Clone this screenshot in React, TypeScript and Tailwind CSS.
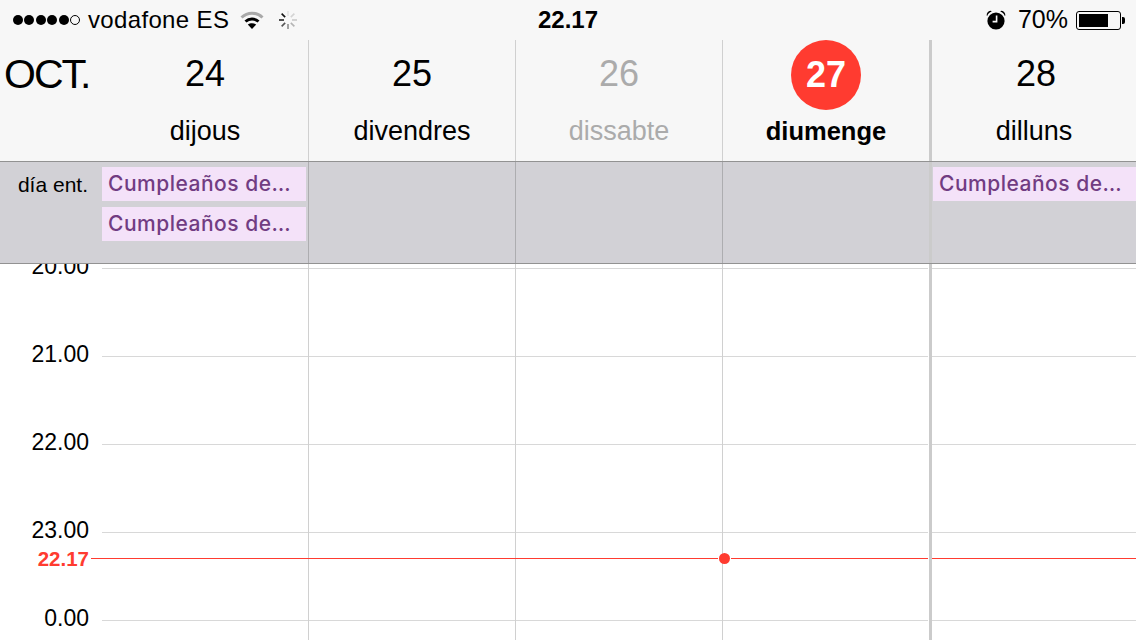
const sans = "font-['Liberation_Sans',Arial,sans-serif]";

const days = [
  { num: '24', name: 'dijous', width: 'w-[207px]', line: 'border-r border-[#d0d0d0]', allDayLine: 'border-r border-[#adadb0]' },
  { num: '25', name: 'divendres', width: 'w-[207px]', line: 'border-r border-[#d0d0d0]', allDayLine: 'border-r border-[#adadb0]' },
  { num: '26', name: 'dissabte', width: 'w-[207px]', line: 'border-r border-[#d0d0d0]', allDayLine: 'border-r border-[#adadb0]', muted: true },
  { num: '27', name: 'diumenge', width: 'w-[207px]', line: 'border-r border-[#d0d0d0]', allDayLine: 'border-r border-[#adadb0]', today: true },
  { num: '28', name: 'dilluns', width: 'w-[204px]', line: '', allDayLine: '' },
];

// 4th column carries the thick week divider
function columnClass(i: number) {
  if (i === 3) return 'w-[209px] border-r-[3px] border-[#cbcbcb]';
  return `${days[i].width} ${days[i].line}`;
}

function SignalDots() {
  return (
    <div className="flex items-center gap-[1.4px]">
      {[0, 1, 2, 3, 4].map((i) => (
        <span key={i} className="w-[10px] h-[10px] rounded-full bg-black" />
      ))}
      <span className="w-[10px] h-[10px] rounded-full border border-black" />
    </div>
  );
}

function Wifi() {
  return (
    <svg width="24" height="18" viewBox="0 0 24 18" className="ml-[11px]">
      <path d="M1.5 6.5C7.5 0.7 16.5 0.7 22.5 6.5" fill="none" stroke="#a9a9a9" strokeWidth="3" />
      <path d="M5.5 10.5C9.2 7.2 14.8 7.2 18.5 10.5" fill="none" stroke="#000" strokeWidth="3" />
      <path d="M7.8 13.6C10.2 11.8 13.8 11.8 16.2 13.6L12 18Z" fill="#000" />
    </svg>
  );
}

function Spinner() {
  const shades = ['#e2e2e2', '#d4d4d4', '#c8c8c8', '#b4b4b4', '#8c8c8c', '#555555', '#222222', '#111111'];
  // starts at the top spoke and goes clockwise
  return (
    <svg width="20" height="20" viewBox="0 0 20 20" className="ml-[14px]">
      {shades.map((c, i) => (
        <line key={i} x1="10" y1="1" x2="10" y2="6" stroke={c} strokeWidth="1.6" transform={`rotate(${i * 45} 10 10)`} />
      ))}
    </svg>
  );
}

function Alarm() {
  return (
    <svg width="20" height="20" viewBox="0 0 20 20">
      <path d="M0.6 5.5C0.6 2.6 2.6 0.8 5 0.8L5.6 1.8C3.4 2.4 2 3.8 1.4 5.8Z" fill="#000" />
      <path d="M19.4 5.5C19.4 2.6 17.4 0.8 15 0.8L14.4 1.8C16.6 2.4 18 3.8 18.6 5.8Z" fill="#000" />
      <circle cx="10" cy="11" r="8.6" fill="#000" />
      <path d="M10.6 5.5V11.6H6.6" fill="none" stroke="#f7f7f7" strokeWidth="1.6" />
    </svg>
  );
}

function Battery() {
  return (
    <div className="flex items-center ml-[8px]">
      <div className="w-[45px] h-[19px] rounded-[3px] border border-black p-[2px]">
        <div className="w-[29px] h-full bg-black" />
      </div>
      <div className="w-[3px] h-[7px] ml-px bg-black rounded-r-[2px]" />
    </div>
  );
}

function Event() {
  return (
    <div className="h-[34px] bg-[#f4e2f9] pl-[6px] font-['Inter',sans-serif] text-[21px] tracking-[0.5px] leading-[34px] font-medium text-[#713c82] whitespace-nowrap overflow-hidden">
      Cumpleaños de…
    </div>
  );
}

const hours = ['20.00', '21.00', '22.00', '23.00', '0.00'];

export default function App() {
  return (
    <div className={`w-[1136px] h-[640px] overflow-hidden bg-white text-black flex flex-col relative ${sans}`}>
      {/* status bar */}
      <div className="h-[40px] shrink-0 bg-[#f7f7f7] flex items-center text-[24px]">
        <div className="flex-1 flex items-center pl-[13px]">
          <SignalDots />
          <span className="ml-[8px] tracking-[0.35px]">vodafone ES</span>
          <Wifi />
          <Spinner />
        </div>
        <div className="text-[24px] font-bold pr-[2px]">22.17</div>
        <div className="flex-1 flex items-center justify-end pr-[11px]">
          <Alarm />
          <span className="ml-[12px] text-[25px]">70%</span>
          <Battery />
        </div>
      </div>

      {/* day headers */}
      <div className="h-[121px] shrink-0 bg-[#f7f7f7] flex">
        <div className="w-[102px] shrink-0 pl-[4px] pt-[10px] text-[41px] leading-[48px] tracking-[-2px]">OCT.</div>
        {days.map((d, i) => (
          <div key={d.num} className={`shrink-0 flex flex-col items-center ${columnClass(i)}`}>
            {d.today ? (
              <div className="w-[70px] h-[70px] mb-[7px] rounded-full bg-[#ff3b30] text-white font-bold text-[36px] flex items-center justify-center">
                {d.num}
              </div>
            ) : (
              <div className={`h-[68px] mb-[9px] flex items-center text-[36px] ${d.muted ? 'text-[#ababab]' : ''} ${i === 4 ? 'pl-[4px]' : ''}`}>{d.num}</div>
            )}
            <div className={`leading-[28px] ${d.today ? 'text-[25.5px] font-bold' : 'text-[27px]'} ${d.muted ? 'text-[#ababab]' : ''}`}>
              {d.name}
            </div>
          </div>
        ))}
      </div>

      {/* all day band */}
      <div className="h-[103px] shrink-0 bg-[#d2d1d6] border-y border-[#929292] flex relative z-10">
        <div className="w-[102px] shrink-0 pr-[14px] pt-[9px] text-right text-[21px] leading-[27px]">día ent.</div>
        {days.map((d, i) => (
          <div
            key={d.num}
            className={`shrink-0 flex flex-col gap-[6px] pt-[5px] ${i === 3 ? 'w-[209px] border-r-[3px] border-[#cbcbcb]' : `${d.width} ${d.allDayLine}`} ${i === 0 ? 'pr-[2px]' : ''} ${i === 4 ? 'pl-px' : ''}`}
          >
            {i === 0 && <Event />}
            {i === 0 && <Event />}
            {i === 4 && <Event />}
          </div>
        ))}
      </div>

      {/* hour grid */}
      <div className="flex-1 flex relative overflow-hidden">
        <div className="w-[102px] shrink-0 -mt-[42px] pr-[13px] text-right text-[23px]">
          {hours.map((h) => (
            <div key={h} className="h-[88px] flex items-center justify-end">{h}</div>
          ))}
        </div>
        {days.map((d, i) => (
          <div key={d.num} className={`shrink-0 -mt-[83px] h-[800px] ${columnClass(i)}`}>
            {[0, 1, 2, 3, 4, 5].map((r) => (
              <div key={r} className={`h-[88px] border-b border-[#d8d8d8] ${i === 3 ? 'mr-px' : ''}`} />
            ))}
          </div>
        ))}

        {/* now marker */}
        <div className="absolute left-0 right-0 top-[288px] h-[13px] flex items-center">
          <div className="w-[89px] text-right text-[20.5px] leading-[13px] font-bold text-[#ff3b30]">22.17</div>
          <div className="ml-[2px] w-[627px] h-px bg-[#ff3b30]" />
          <div className="ml-px w-[11px] h-[11px] rounded-full bg-[#ff3b30]" />
          <div className="ml-px w-[197px] h-px bg-[#ff3b30]" />
          <div className="ml-[4px] flex-1 h-px bg-[#ff3b30]" />
        </div>
      </div>
    </div>
  );
}
